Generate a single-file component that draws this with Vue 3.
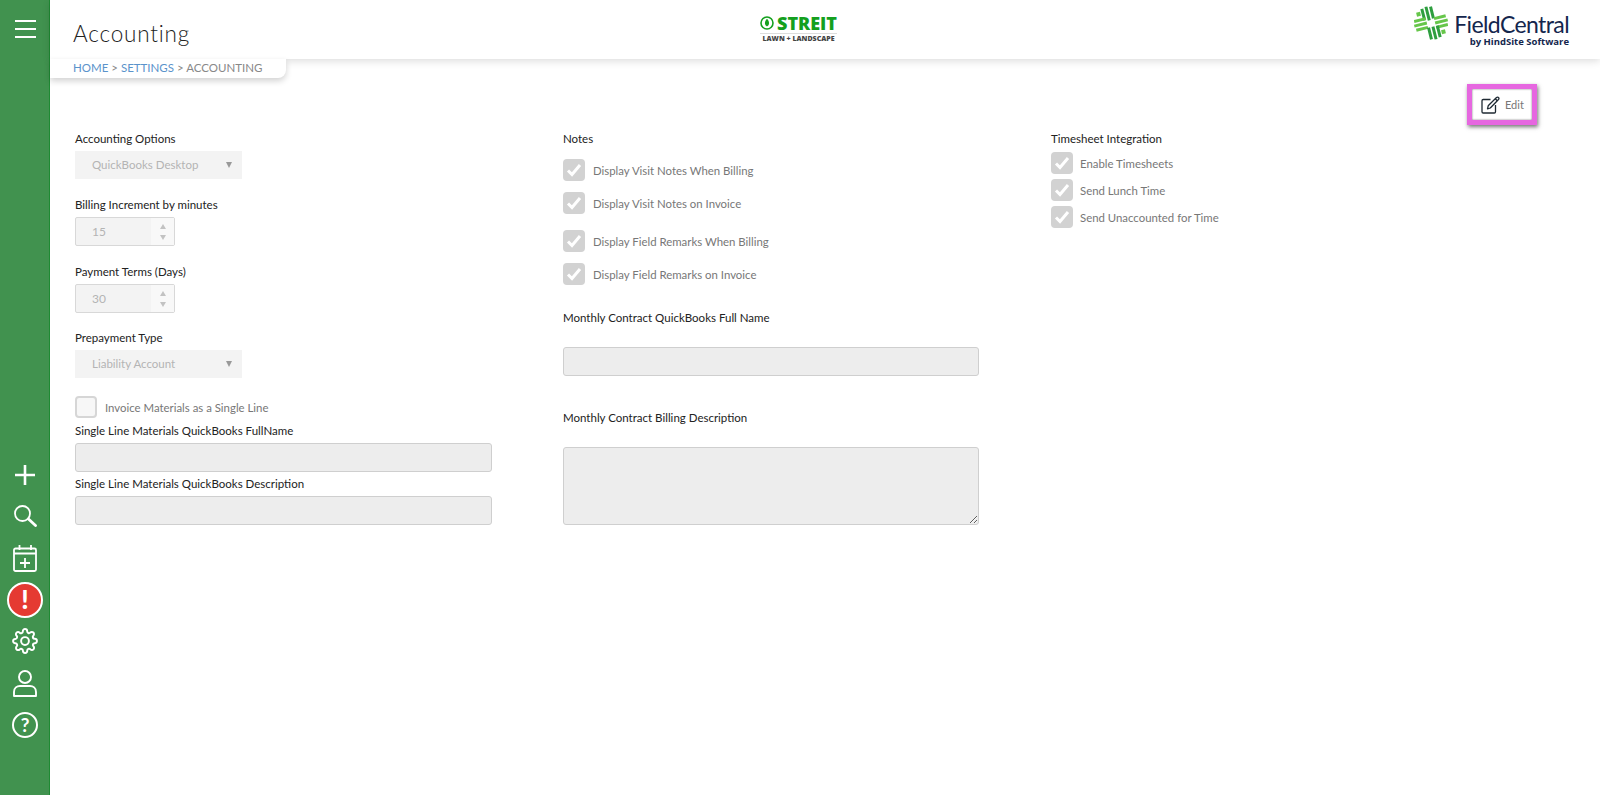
<script setup>
const notes = [
  { label: 'Display Visit Notes When Billing', gap: 0 },
  { label: 'Display Visit Notes on Invoice', gap: 11 },
  { label: 'Display Field Remarks When Billing', gap: 16 },
  { label: 'Display Field Remarks on Invoice', gap: 11 }
]
const timesheets = ['Enable Timesheets', 'Send Lunch Time', 'Send Unaccounted for Time']
</script>

<template>
  <div class="page">
    <nav class="sidebar">
      <button class="menu-btn" aria-label="Menu">
        <span></span><span></span><span></span>
      </button>
      <div class="side-icons">
        <svg width="20" height="20" viewBox="0 0 20 20" fill="none" stroke="#fff" stroke-width="2.6"><path d="M10 0v20M0 10h20"/></svg>
        <svg class="search" width="23" height="22" viewBox="0 0 23 22" fill="none" stroke="#fff" stroke-width="1.800"><circle cx="8.500" cy="8.500" r="7.500"/><path d="M14.500 14l7 6.500" stroke-width="2.800" stroke-linecap="round"/></svg>
        <svg class="cal" width="24" height="27" viewBox="0 0 24 27" fill="none" stroke="#fff" stroke-width="1.800"><rect x="1" y="3.500" width="22" height="22.500" rx="1.500"/><path d="M1 8.500h22M6.500 0v5M18 0v5M12 13v10M7 18h10"/></svg>
        <div class="alert">!</div>
        <svg class="gear" width="26" height="26" viewBox="0 0 24 24" fill="none" stroke="#fff" stroke-width="1.800" stroke-linejoin="round"><circle cx="12" cy="12" r="3.600"/><path d="M19.400 15a1.650 1.650 0 0 0 .33 1.820l.06.06a2 2 0 0 1 0 2.830 2 2 0 0 1-2.830 0l-.06-.06a1.650 1.650 0 0 0-1.820-.33 1.650 1.650 0 0 0-1 1.510V21a2 2 0 0 1-2 2 2 2 0 0 1-2-2v-.09A1.650 1.650 0 0 0 9 19.400a1.650 1.650 0 0 0-1.820.33l-.06.06a2 2 0 0 1-2.830 0 2 2 0 0 1 0-2.830l.06-.06a1.650 1.650 0 0 0 .33-1.820 1.650 1.650 0 0 0-1.510-1H3a2 2 0 0 1-2-2 2 2 0 0 1 2-2h.09A1.650 1.650 0 0 0 4.600 9a1.650 1.650 0 0 0-.33-1.820l-.06-.06a2 2 0 0 1 0-2.830 2 2 0 0 1 2.830 0l.06.06a1.650 1.650 0 0 0 1.820.33H9a1.650 1.650 0 0 0 1-1.510V3a2 2 0 0 1 2-2 2 2 0 0 1 2 2v.09a1.650 1.650 0 0 0 1 1.510 1.650 1.650 0 0 0 1.820-.33l.06-.06a2 2 0 0 1 2.830 0 2 2 0 0 1 0 2.830l-.06.06a1.650 1.650 0 0 0-.33 1.820V9a1.650 1.650 0 0 0 1.510 1H21a2 2 0 0 1 2 2 2 2 0 0 1-2 2h-.09a1.650 1.650 0 0 0-1.510 1z"/></svg>
        <svg class="user" width="24" height="27" viewBox="0 0 24 27" fill="none" stroke="#fff" stroke-width="1.900"><circle cx="12" cy="7" r="6"/><path d="M1 26v-4c0-4 3-6 6-6h10c3 0 6 2 6 6v4z" stroke-linejoin="round"/></svg>
        <div class="help">?</div>
      </div>
    </nav>

    <div class="content">
      <header class="topbar">
        <h1>Accounting</h1>
        <div class="streit">
          <div class="streit-top">
            <svg width="14" height="14" viewBox="0 0 14 14"><circle cx="7" cy="7" r="6" fill="none" stroke="#14a01e" stroke-width="1.600"/><path d="M7 2.800c2 2 2.400 4.200 1.800 5.800-.4 1-1.200 1.600-1.800 1.800-.6-.2-1.400-.8-1.800-1.800-.6-1.600-.2-3.800 1.800-5.800z" fill="#14a01e"/></svg>
            <span>STREIT</span>
          </div>
          <div class="streit-sub">LAWN + LANDSCAPE</div>
        </div>
        <div class="fc">
          <svg width="34" height="34" viewBox="0 0 34 34" fill="none">
            <g transform="rotate(-14 17 17)" stroke-width="3">
              <path d="M11.500 1v12M16 0v14M20.500 1v12" stroke="#2e9e3f" />
              <path d="M1 11.500h12M0 16h13M1 20.500h12" stroke="#66c64a" />
              <path d="M21 13.500h12M21 18h13M21 22.500h12" stroke="#66c64a" />
              <path d="M13.500 21v12M18 21v13M22.500 21v12" stroke="#2e9e3f" />
              <path d="M5 3.500h4v4h-4zM25 26.500h4v4h-4z" fill="#66c64a" stroke="none" />
            </g>
          </svg>
          <div class="fc-text">
            <div class="fc-name">FieldCentral</div>
            <div class="fc-by">by HindSite Software</div>
          </div>
        </div>
      </header>

      <div class="breadcrumb">
        <a>HOME</a> <i>&gt;</i> <a>SETTINGS</a> <i>&gt;</i> ACCOUNTING
      </div>

      <div class="toolbar">
        <button class="edit-btn">
          <svg width="19" height="18" viewBox="0 0 19 18" fill="none" stroke="#1f2a33" stroke-width="1.300"><path d="M9.500 3.500H2.200A1.200 1.200 0 0 0 1 4.700v11.100A1.200 1.200 0 0 0 2.200 17h11.100a1.200 1.200 0 0 0 1.200-1.200V9"/><path d="M6.500 12.800l.7-3L15.500 1.500c.7-.6 1.500-.6 2 0 .6.600.6 1.300 0 2l-8.200 8.500z" stroke-linejoin="round"/><path d="M14.300 2.800l2 2"/></svg>
          <span>Edit</span>
        </button>
      </div>

      <main class="form">
        <section class="col col-one">
          <label class="field-label">Accounting Options</label>
          <div class="select">QuickBooks Desktop<em></em></div>

          <label class="field-label mt-billing">Billing Increment by minutes</label>
          <div class="number">
            <span>15</span>
            <div class="spin"><b class="up"></b><b class="down"></b></div>
          </div>

          <label class="field-label mt-terms">Payment Terms (Days)</label>
          <div class="number">
            <span>30</span>
            <div class="spin"><b class="up"></b><b class="down"></b></div>
          </div>

          <label class="field-label mt-prepay">Prepayment Type</label>
          <div class="select">Liability Account<em></em></div>

          <div class="check-row single-line">
            <div class="check"></div>
            <span>Invoice Materials as a Single Line</span>
          </div>
          <label class="field-label">Single Line Materials QuickBooks FullName</label>
          <input class="text-input" type="text" disabled />
          <label class="field-label mt-desc">Single Line Materials QuickBooks Description</label>
          <input class="text-input" type="text" disabled />
        </section>

        <section class="col col-two">
          <label class="field-label">Notes</label>
          <div class="notes">
            <div v-for="n in notes" :key="n.label" class="check-row" :style="{ marginTop: n.gap + 'px' }">
              <div class="check on">
                <svg width="16" height="14" viewBox="0 0 16 14" fill="none" stroke="#fff" stroke-width="3"><path d="M2 7.500l4 4L14 2"/></svg>
              </div>
              <span>{{ n.label }}</span>
            </div>
          </div>
          <label class="field-label mt-contract">Monthly Contract QuickBooks Full Name</label>
          <input class="text-input mt-contract-input" type="text" disabled />
          <label class="field-label mt-billdesc">Monthly Contract Billing Description</label>
          <textarea class="text-area" disabled></textarea>
        </section>

        <section class="col col-three">
          <label class="field-label">Timesheet Integration</label>
          <div class="timesheets">
            <div v-for="t in timesheets" :key="t" class="check-row">
              <div class="check on">
                <svg width="16" height="14" viewBox="0 0 16 14" fill="none" stroke="#fff" stroke-width="3"><path d="M2 7.500l4 4L14 2"/></svg>
              </div>
              <span>{{ t }}</span>
            </div>
          </div>
        </section>
      </main>
    </div>
  </div>
</template>

<style>
html, body {
  margin: 0;
  background: #fff;
}
</style>

<style scoped>
.page {
  display: flex;
  height: 795px;
  overflow: hidden;
  font-family: Lato, "Noto Sans", sans-serif;
  color: #2a2a2a;
}

.sidebar {
  width: 50px;
  flex: none;
  box-sizing: border-box;
  padding-left: 1px;
  background: #41924f;
  border-right: 1px solid #1f8a33;
  display: flex;
  flex-direction: column;
  align-items: center;
}

.menu-btn {
  margin-top: 20px;
  width: 21px;
  padding: 0;
  border: none;
  background: none;
  display: flex;
  flex-direction: column;
  gap: 6px;
}

.menu-btn span {
  height: 2px;
  background: #fff;
}

.side-icons {
  margin-top: 427px;
  display: flex;
  flex-direction: column;
  align-items: center;
}

.search { margin-top: 20px; }
.cal { margin-top: 18px; }

.alert {
  margin-top: 10px;
  width: 36px;
  height: 36px;
  box-sizing: border-box;
  border: 2px solid #fff;
  border-radius: 50%;
  background: #e53a32;
  color: #fff;
  font: 900 26px/31px Lato, sans-serif;
  text-align: center;
}

.gear { margin-top: 10px; }
.user { margin-top: 16px; }

.help {
  margin-top: 15px;
  width: 26px;
  height: 26px;
  box-sizing: border-box;
  border: 2px solid #fff;
  border-radius: 50%;
  color: #fff;
  font: 700 19px/22px Lato, sans-serif;
  text-align: center;
}

.content {
  flex: 1;
  min-width: 0;
}

.topbar {
  position: relative;
  z-index: 1;
  height: 59px;
  box-sizing: border-box;
  padding: 0 31px 0 23px;
  background: #fff;
  box-shadow: 0 2px 8px rgba(0, 0, 0, 0.14);
  display: grid;
  grid-template-columns: 1fr auto 1fr;
  align-items: center;
}

h1 {
  margin: 8px 0 0;
  font-size: 22.500px;
  font-weight: 300;
  letter-spacing: 0.8px;
  color: #222;
}

.streit {
  margin-left: -45px;
  margin-top: -2px;
  text-align: center;
}

.streit-top {
  display: flex;
  align-items: center;
  gap: 3px;
  color: #14a01e;
  font: 900 18px/17px "Open Sans", sans-serif;
}

.streit-sub {
  margin-top: 1px;
  border-top: 1px solid #ddd;
  font: 800 7px/9px "Open Sans", sans-serif;
  color: #444;
  white-space: nowrap;
}

.fc {
  justify-self: end;
  display: flex;
  align-items: flex-start;
  gap: 6px;
  margin-top: -6px;
}

.fc-text {
  text-align: right;
}

.fc-name {
  font-size: 23px;
  line-height: 21px;
  margin-top: 8px;
  letter-spacing: -0.6px;
  color: #14264d;
}

.fc-by {
  margin-top: 1px;
  font: 700 9.500px/11px "Open Sans", sans-serif;
  color: #14264d;
}

.breadcrumb {
  position: relative;
  z-index: 2;
  width: 236px;
  height: 19px;
  box-sizing: border-box;
  padding-left: 23px;
  background: #fff;
  border-radius: 0 0 8px 0;
  box-shadow: 0 3px 6px rgba(0, 0, 0, 0.18);
  font-size: 11.500px;
  line-height: 17px;
  color: #888;
  white-space: nowrap;
}

.breadcrumb a {
  color: #5b93cb;
}

.breadcrumb i {
  font-style: normal;
}

.toolbar {
  display: flex;
  justify-content: flex-end;
  padding: 6px 63px 0 0;
}

.edit-btn {
  width: 70px;
  height: 41px;
  box-sizing: border-box;
  padding: 0 0 0 9px;
  background: #fff;
  border: 5px solid #e667e0;
  box-shadow: 1px 2px 4px rgba(0, 0, 0, 0.55), inset 0 0 2px rgba(0, 0, 0, 0.6);
  display: flex;
  align-items: center;
  gap: 5px;
  font: 400 11px Lato, sans-serif;
  color: #777;
}

.form {
  display: grid;
  grid-template-columns: repeat(3, 488px);
  padding: 6px 0 0 25px;
}

.col {
  display: flex;
  flex-direction: column;
  align-items: flex-start;
}

.field-label {
  display: block;
  font-size: 11.500px;
  line-height: 16px;
  font-weight: 400;
  color: #222;
}

.select {
  margin-top: 4px;
  width: 167px;
  height: 28px;
  box-sizing: border-box;
  padding-left: 17px;
  background: #f3f3f3;
  color: #b4b4b4;
  font-size: 11.500px;
  line-height: 28px;
  position: relative;
}

.select em {
  position: absolute;
  right: 10px;
  top: 11px;
  border-style: solid;
  border-width: 6px 3.500px 0;
  border-color: #999 transparent transparent;
}

.number {
  margin-top: 4px;
  width: 100px;
  height: 29px;
  box-sizing: border-box;
  border: 1px solid #d8d8d8;
  border-radius: 2px;
  background: #f3f3f3;
  color: #b4b4b4;
  font-size: 12px;
  line-height: 27px;
  padding-left: 16px;
  display: flex;
  justify-content: space-between;
}

.spin {
  width: 23px;
  background: #f8f8f8;
  display: flex;
  flex-direction: column;
  align-items: center;
  justify-content: center;
  gap: 6px;
}

.spin b {
  border-style: solid;
  border-color: transparent;
}

.spin .up {
  border-width: 0 3.500px 5px;
  border-bottom-color: #c2c2c2;
}

.spin .down {
  border-width: 5px 3.500px 0;
  border-top-color: #c2c2c2;
}

.mt-billing { margin-top: 18px; }
.mt-terms { margin-top: 18px; }
.mt-prepay { margin-top: 17px; }
.mt-desc { margin-top: 4px; }

.check-row {
  display: flex;
  align-items: center;
  gap: 8px;
  font-size: 11.400px;
  color: #777;
  white-space: nowrap;
}

.check {
  flex: none;
  width: 22px;
  height: 22px;
  box-sizing: border-box;
  border-radius: 4px;
  display: flex;
  align-items: center;
  justify-content: center;
}

.check:not(.on) {
  background: #f7f7f7;
  border: 2px solid #d6d6d6;
}

.check.on {
  background: #d2d2d2;
}

.single-line {
  margin: 18px 0 5px;
}

.text-input {
  display: block;
  margin: 4px 0 0;
  width: 417px;
  height: 29px;
  box-sizing: border-box;
  border: 1px solid #cfcfcf;
  border-radius: 3px;
  background: #ededed;
}

.notes {
  margin-top: 12px;
  display: flex;
  flex-direction: column;
}

.timesheets {
  margin-top: 5px;
  display: flex;
  flex-direction: column;
  gap: 5px;
}

.timesheets .check-row {
  gap: 7px;
}

.mt-contract { margin-top: 25px; }
.mt-contract-input { margin-top: 21px; width: 416px; }
.mt-billdesc { margin-top: 34px; }

.text-area {
  display: block;
  margin-top: 21px;
  width: 416px;
  height: 78px;
  box-sizing: border-box;
  border: 1px solid #cfcfcf;
  border-radius: 3px;
  background: #ededed;
  resize: both;
}
</style>
